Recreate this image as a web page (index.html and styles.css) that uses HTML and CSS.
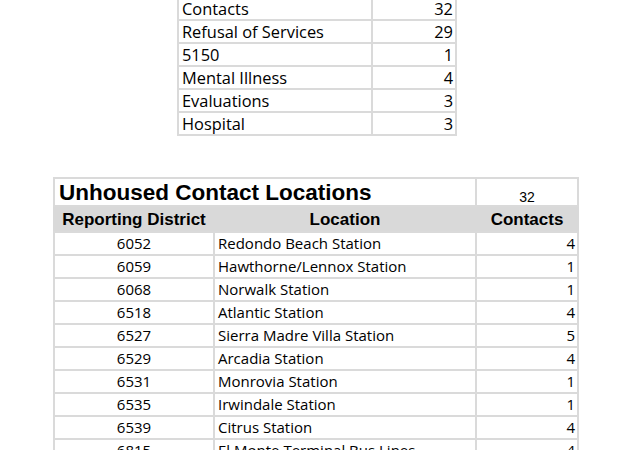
FILE: index.html
```html
<!DOCTYPE html>
<html>
<head>
<meta charset="utf-8">
<link rel="stylesheet" href="styles.css">
</head>
<body>
<div class="page">
  <div class="summary">
    <div class="cell txt">Contacts</div><div class="cell num">32</div>
    <div class="cell txt">Refusal of Services</div><div class="cell num">29</div>
    <div class="cell txt">5150</div><div class="cell num">1</div>
    <div class="cell txt">Mental Illness</div><div class="cell num">4</div>
    <div class="cell txt">Evaluations</div><div class="cell num">3</div>
    <div class="cell txt">Hospital</div><div class="cell num">3</div>
  </div>

  <div class="locations">
    <div class="title">Unhoused Contact Locations</div>
    <div class="total">32</div>
    <div class="head">Reporting District</div>
    <div class="head">Location</div>
    <div class="head">Contacts</div>

    <div class="cell ctr">6052</div><div class="cell txt">Redondo Beach Station</div><div class="cell num">4</div>
    <div class="cell ctr">6059</div><div class="cell txt">Hawthorne/Lennox Station</div><div class="cell num">1</div>
    <div class="cell ctr">6068</div><div class="cell txt">Norwalk Station</div><div class="cell num">1</div>
    <div class="cell ctr">6518</div><div class="cell txt">Atlantic Station</div><div class="cell num">4</div>
    <div class="cell ctr">6527</div><div class="cell txt">Sierra Madre Villa Station</div><div class="cell num">5</div>
    <div class="cell ctr">6529</div><div class="cell txt">Arcadia Station</div><div class="cell num">4</div>
    <div class="cell ctr">6531</div><div class="cell txt">Monrovia Station</div><div class="cell num">1</div>
    <div class="cell ctr">6535</div><div class="cell txt">Irwindale Station</div><div class="cell num">1</div>
    <div class="cell ctr">6539</div><div class="cell txt">Citrus Station</div><div class="cell num">4</div>
    <div class="cell ctr">6815</div><div class="cell txt">El Monte Terminal Bus Lines</div><div class="cell num">4</div>
  </div>
</div>
</body>
</html>
```
FILE: styles.css
```css
html, body {
  margin: 0;
  padding: 0;
  background: #ffffff;
  overflow: hidden;
  height: 450px;
}
.page {
  display: flex;
  flex-direction: column;
  align-items: flex-start;
  font-family: "Open Sans", "Liberation Sans", sans-serif;
  color: #000;
}
.summary {
  margin-top: -4px;
  margin-left: 177px;
  display: grid;
  grid-template-columns: 192px 82px;
  grid-auto-rows: 21px;
  gap: 2px;
  padding: 2px;
  background: #dadada;
}
.summary .cell {
  font-size: 16.4px;
}
.cell {
  background: #fff;
  font-size: 15px;
  line-height: 21px;
  white-space: nowrap;
  overflow: hidden;
}
.txt { padding-left: 3px; }
.num { text-align: right; padding-right: 2px; }
.ctr { text-align: center; }

.locations {
  margin-top: 41px;
  margin-left: 53px;
  display: grid;
  grid-template-columns: 158px 260px 100px;
  grid-template-rows: 26px 24px;
  grid-auto-rows: 21px;
  column-gap: 2px;
  row-gap: 2px;
  padding: 2px;
  background: #dadada;
}
.title {
  grid-column: 1 / 3;
  background: #fff;
  font-family: "Liberation Sans", Arial, sans-serif;
  font-weight: bold;
  font-size: 22.5px;
  line-height: 27px;
  padding-left: 4px;
  white-space: nowrap;
}
.total {
  background: #fff;
  font-family: "Liberation Sans", Arial, sans-serif;
  font-size: 14px;
  line-height: 14px;
  text-align: center;
  display: flex;
  align-items: flex-end;
  justify-content: center;
  padding-bottom: 1px;
}
.head {
  background: #d9d9d9;
  margin-left: -2px;
  margin-right: -2px;
  padding: 0 2px;
  font-family: "Liberation Sans", Arial, sans-serif;
  font-weight: bold;
  font-size: 17px;
  line-height: 25px;
  text-align: center;
  white-space: nowrap;
}
.head:first-of-type { margin-left: 0; }
```
